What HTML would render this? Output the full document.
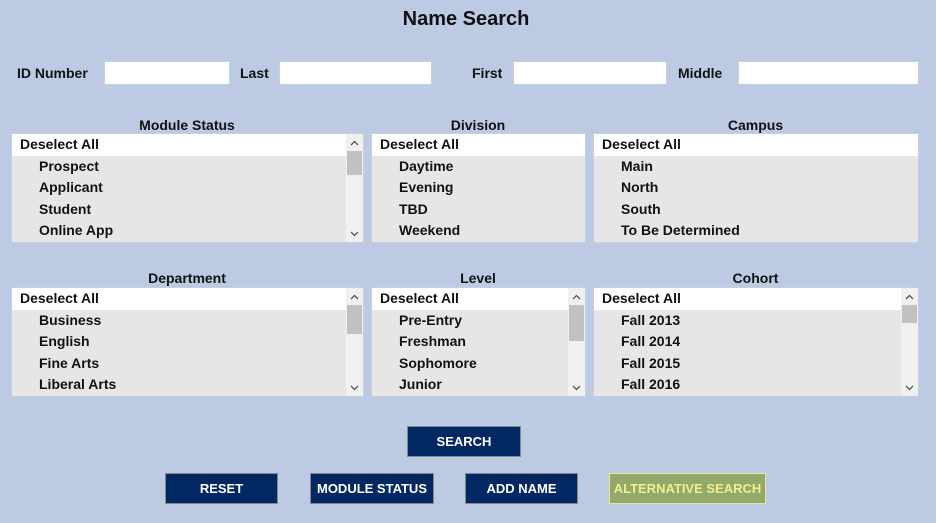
<!DOCTYPE html><html><head><style>
body{margin:0;width:936px;height:523px;background:#bccbe3;font-family:"Liberation Sans",Arial,sans-serif;position:relative;overflow:hidden;color:#111}
.a{position:absolute}
h1{position:absolute;left:0;width:932px;top:8px;margin:0;text-align:center;font-size:20px;font-weight:bold}
.lb{font-size:14px;font-weight:bold;top:65px}
.in{background:#fff;border:1px solid #c8d0dc;height:22px;top:61px}
.t{font-size:14px;font-weight:bold;text-align:center;top:117px}
.box{background:#e6e6e6;border:1px solid #c8cfd8;overflow:hidden}
.box .r{height:21.5px;line-height:21.5px;font-size:14px;font-weight:bold;padding-left:27px}
.box .r.h{background:#fff;padding-left:8px}
.sb{position:absolute;right:0;top:0;width:17px;height:100%;background:#f0f0f0}
.th{position:absolute;left:1px;width:15px;top:17px;height:24px;background:#c1c1c1}
.sb svg{position:absolute;left:4px}
.btn{background:#012863;color:#fff;border:1px solid #888;font-size:13px;font-weight:bold;text-align:center;line-height:29px;height:29px;box-sizing:content-box}
</style></head><body>
<h1>Name Search</h1>
<div class="a lb" style="left:17px">ID Number</div><div class="a in" style="left:104px;width:124px"></div>
<div class="a lb" style="left:240px">Last</div><div class="a in" style="left:279px;width:151px"></div>
<div class="a lb" style="left:472px">First</div><div class="a in" style="left:513px;width:152px"></div>
<div class="a lb" style="left:678px">Middle</div><div class="a in" style="left:738px;width:179px"></div>

<div class="a t" style="left:11px;width:352px">Module Status</div>
<div class="a t" style="left:371px;width:214px">Division</div>
<div class="a t" style="left:593px;width:325px">Campus</div>
<div class="a t" style="left:11px;width:352px;top:270px">Department</div>
<div class="a t" style="left:371px;width:214px;top:270px">Level</div>
<div class="a t" style="left:593px;width:325px;top:270px">Cohort</div>

<div class="a box" style="left:11px;top:133px;width:351px;height:108px"><div class="r h">Deselect All</div><div class="r">Prospect</div><div class="r">Applicant</div><div class="r">Student</div><div class="r">Online App</div><div class="sb"><svg width="9" height="6" style="top:6px"><path d="M1 5L4.5 1.5L8 5" fill="none" stroke="#555" stroke-width="1.3"/></svg><div class="th"></div><svg width="9" height="6" style="bottom:5px"><path d="M1 1L4.5 4.5L8 1" fill="none" stroke="#555" stroke-width="1.3"/></svg></div></div>
<div class="a box" style="left:371px;top:133px;width:213px;height:108px"><div class="r h">Deselect All</div><div class="r">Daytime</div><div class="r">Evening</div><div class="r">TBD</div><div class="r">Weekend</div></div>
<div class="a box" style="left:593px;top:133px;width:324px;height:108px"><div class="r h">Deselect All</div><div class="r">Main</div><div class="r">North</div><div class="r">South</div><div class="r">To Be Determined</div></div>

<div class="a box" style="left:11px;top:287px;width:351px;height:108px"><div class="r h">Deselect All</div><div class="r">Business</div><div class="r">English</div><div class="r">Fine Arts</div><div class="r">Liberal Arts</div><div class="sb"><svg width="9" height="6" style="top:6px"><path d="M1 5L4.5 1.5L8 5" fill="none" stroke="#555" stroke-width="1.3"/></svg><div class="th" style="height:29px"></div><svg width="9" height="6" style="bottom:5px"><path d="M1 1L4.5 4.5L8 1" fill="none" stroke="#555" stroke-width="1.3"/></svg></div></div>
<div class="a box" style="left:371px;top:287px;width:213px;height:108px"><div class="r h">Deselect All</div><div class="r">Pre-Entry</div><div class="r">Freshman</div><div class="r">Sophomore</div><div class="r">Junior</div><div class="sb"><svg width="9" height="6" style="top:6px"><path d="M1 5L4.5 1.5L8 5" fill="none" stroke="#555" stroke-width="1.3"/></svg><div class="th" style="height:36px"></div><svg width="9" height="6" style="bottom:5px"><path d="M1 1L4.5 4.5L8 1" fill="none" stroke="#555" stroke-width="1.3"/></svg></div></div>
<div class="a box" style="left:593px;top:287px;width:324px;height:108px"><div class="r h">Deselect All</div><div class="r">Fall 2013</div><div class="r">Fall 2014</div><div class="r">Fall 2015</div><div class="r">Fall 2016</div><div class="sb"><svg width="9" height="6" style="top:6px"><path d="M1 5L4.5 1.5L8 5" fill="none" stroke="#555" stroke-width="1.3"/></svg><div class="th" style="height:18px"></div><svg width="9" height="6" style="bottom:5px"><path d="M1 1L4.5 4.5L8 1" fill="none" stroke="#555" stroke-width="1.3"/></svg></div></div>

<div class="a btn" style="left:407px;top:426px;width:112px">SEARCH</div>
<div class="a btn" style="left:165px;top:473px;width:111px">RESET</div>
<div class="a btn" style="left:310px;top:473px;width:122px">MODULE STATUS</div>
<div class="a btn" style="left:465px;top:473px;width:111px">ADD NAME</div>
<div class="a btn" style="left:609px;top:473px;width:155px;background:#93a96b;color:#f0f08a;border-color:#e8e88a">ALTERNATIVE SEARCH</div>
</body></html>
